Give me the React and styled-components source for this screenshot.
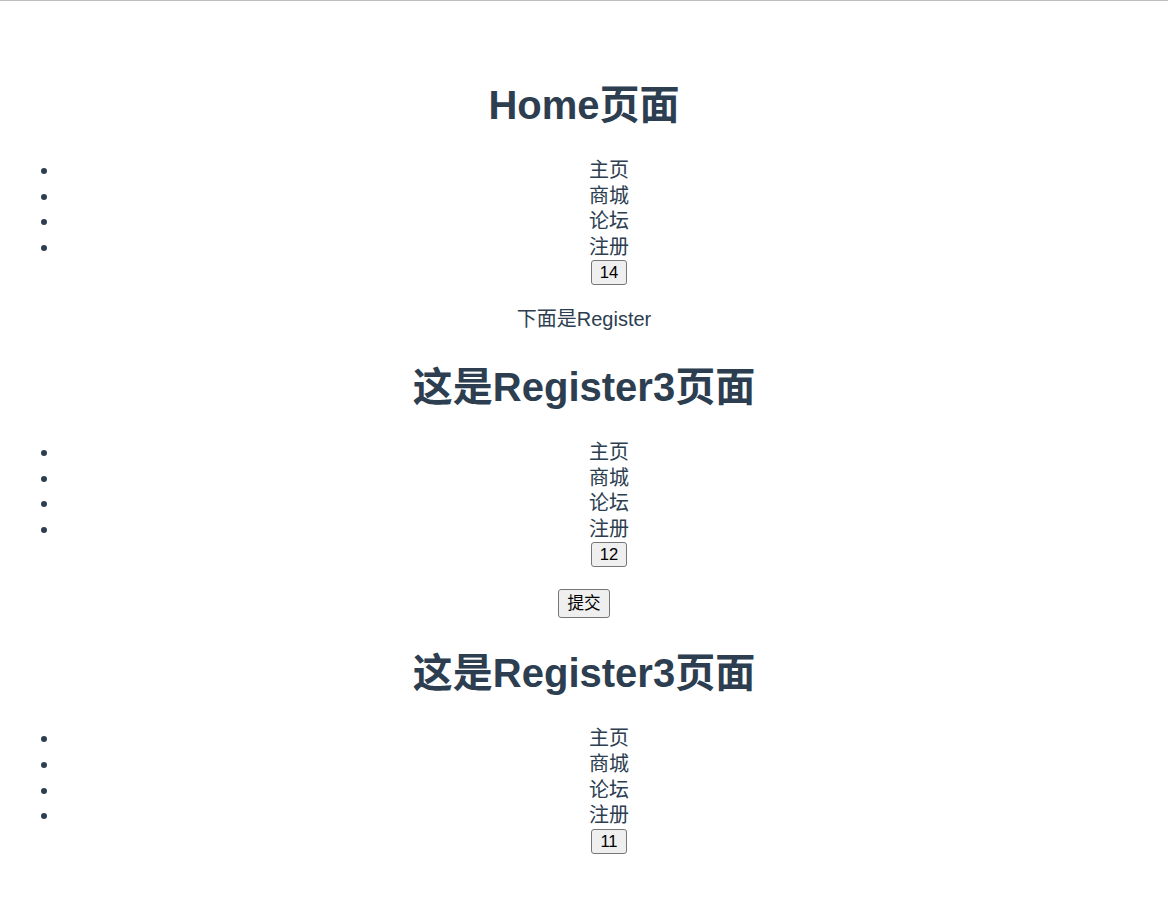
import React from 'react'
import styled, { createGlobalStyle } from 'styled-components'

const GlobalStyle = createGlobalStyle`
  html {
    border-top: 1px solid #bdbdbd;
  }
  body {
    margin: 10px;
    background: #fff;
  }
`

const AppWrapper = styled.div`
  margin-top: 68px;
  font-family: "Liberation Sans", Arial, "Noto Sans CJK SC", sans-serif;
  font-size: 20px;
  line-height: 25.6px;
  text-align: center;
  color: #2c3e50;
`

const PageTitle = styled.h1`
  font-size: 40px;
  line-height: 52px;
  font-weight: bold;
  margin: 28px 0 27px;
`

const NavList = styled.ul`
  list-style: disc;
  margin: 20px 0 0;
  padding-left: 50px;
`

const NavItem = styled.li`
  line-height: 25.6px;
`

const CounterRow = styled.div`
  display: flex;
  justify-content: center;
  align-items: center;
  height: 25px;
  padding-left: 50px;
  margin-bottom: 20px;
`

const Button = styled.button`
  font-family: "Liberation Sans", Arial, "Noto Sans CJK SC", sans-serif;
  font-size: 16.6px;
  line-height: ${p => (p.$tall ? '23px' : '19px')};
  color: #000;
  background: #efefef;
  border: 1px solid #767676;
  border-radius: 3px;
  padding: 2px 8px;
  margin: 0;
`

const Note = styled.p`
  margin: 22px 0 20px;
`

const SubmitRow = styled.div`
  display: flex;
  justify-content: center;
  margin: 22px 0 29px;
`

const links = ['主页', '商城', '论坛', '注册']

function NavBlock({ title, count }) {
  return (
    <section>
      <PageTitle>{title}</PageTitle>
      <NavList>
        {links.map(link => (
          <NavItem key={link}>{link}</NavItem>
        ))}
      </NavList>
      <CounterRow>
        <Button>{count}</Button>
      </CounterRow>
    </section>
  )
}

export default function App() {
  return (
    <>
      <GlobalStyle />
      <AppWrapper>
        <NavBlock title="Home页面" count={14} />
        <Note>下面是Register</Note>
        <NavBlock title="这是Register3页面" count={12} />
        <SubmitRow>
          <Button $tall>提交</Button>
        </SubmitRow>
        <NavBlock title="这是Register3页面" count={11} />
      </AppWrapper>
    </>
  )
}
